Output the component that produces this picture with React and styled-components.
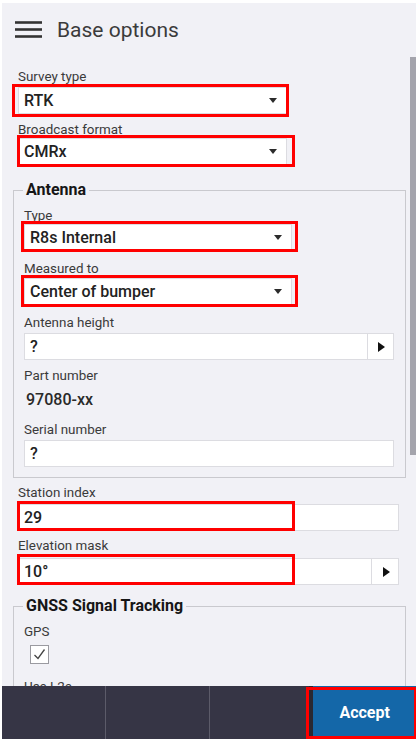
import React from 'react';
import styled, { createGlobalStyle } from 'styled-components';

const Global = createGlobalStyle`
    html, body {
        margin: 0;
        padding: 0;
        background: #ffffff;
    }
    * {
        box-sizing: border-box;
    }
`;

const Frame = styled.div`
    width: 420px;
    height: 742px;
    padding: 3px 4px 3px 2px;
    font-family: Roboto, "Liberation Sans", sans-serif;
    color: #3a3a3a;
`;

const Screen = styled.div`
    height: 100%;
    display: flex;
    flex-direction: column;
    background: #f1f1f6;
    overflow: hidden;
`;

const Header = styled.div`
    height: 54px;
    flex: none;
    display: flex;
    align-items: center;
    padding-left: 13px;
    gap: 14px;
`;

const Title = styled.h1`
    margin: 0;
    font-size: 21px;
    font-weight: 400;
    color: #3b3b3b;
`;

const Body = styled.div`
    flex: 1;
    min-height: 0;
    display: flex;
`;

const Content = styled.div`
    flex: 1;
    overflow: hidden;
    padding: 11.5px 4px 0 11px;
`;

const ScrollTrack = styled.div`
    width: 6px;
    flex: none;
`;

const ScrollThumb = styled.div`
    height: 398px;
    background: #a4a4ac;
`;

const Field = styled.div`
    margin-top: ${p => p.$mt || 0}px;
    padding-left: ${p => (p.$inset ? 0 : 5)}px;
    padding-right: ${p => (p.$inset ? 0 : 7)}px;
`;

const Label = styled.div`
    font-size: 13.4px;
    line-height: 16px;
    height: 16px;
    color: #3a3a3a;
    margin-bottom: ${p => p.$mb || 0}px;
`;

const Box = styled.div`
    position: relative;
    width: ${p => (p.$w ? `${p.$w}px` : '100%')};
    height: 27px;
    display: flex;
    align-items: center;
    background: #ffffff;
    border: 1px solid #dcdce1;
`;

const Value = styled.span`
    flex: 1;
    padding-left: 5px;
    font-size: 16px;
    font-weight: 500;
    color: #222222;
`;

const DropArrow = styled.span`
    width: 0;
    height: 0;
    margin-right: 9px;
    border-left: 4.5px solid transparent;
    border-right: 4.5px solid transparent;
    border-top: 5px solid #2b2b2b;
`;

const SideButton = styled.div`
    width: ${p => p.$w || 26}px;
    height: 100%;
    display: flex;
    align-items: center;
    justify-content: center;
    border-left: 1px solid #dcdce1;
`;

const RightArrow = styled.span`
    width: 0;
    height: 0;
    margin-left: 2px;
    border-top: 5.5px solid transparent;
    border-bottom: 5.5px solid transparent;
    border-left: 7px solid #111111;
`;

const Mark = styled.div`
    position: absolute;
    left: ${p => p.$x}px;
    top: ${p => p.$y}px;
    width: ${p => p.$w}px;
    height: ${p => p.$h}px;
    border: 3px solid #ff0000;
    pointer-events: none;
`;

const Group = styled.fieldset`
    margin: ${p => p.$mt || 0}px 0 0 0;
    min-inline-size: 0;
    border: 1px solid #c9c9ce;
    padding: ${p => p.$pt || 0}px 11px 10px 10px;
`;

const Legend = styled.legend`
    padding: 0 3px;
    margin-left: -1px;
    font-size: 16px;
    line-height: 18px;
    font-weight: 700;
    color: #161616;
`;

const Static = styled.div`
    font-size: 16px;
    line-height: 18px;
    font-weight: 500;
    color: #2a2a2a;
    padding-left: 2px;
`;

const Check = styled.div`
    width: 19px;
    height: 19px;
    margin-left: 6px;
    background: #ffffff;
    border: 1px solid #9a9aa0;
    display: flex;
    align-items: center;
    justify-content: center;
`;

const BottomBar = styled.div`
    flex: none;
    height: 53px;
    display: grid;
    grid-template-columns: repeat(4, 1fr);
    gap: 1px;
    background: #5c5b69;
`;

const BarCell = styled.div`
    background: #363545;
`;

const AcceptButton = styled.button`
    position: relative;
    margin-left: -4px;
    border: none;
    border-left: 4px solid #2a2933;
    background: #1467a8;
    color: #ffffff;
    font-family: Roboto, "Liberation Sans", sans-serif;
    font-size: 16px;
    font-weight: 700;
    padding: 0;
`;

const Hamburger = () => (
    <svg width="28" height="20" viewBox="0 0 28 20">
        <g stroke="#333" strokeWidth="2.6">
            <line x1="0" y1="2.5" x2="27" y2="2.5" />
            <line x1="0" y1="9.5" x2="27" y2="9.5" />
            <line x1="0" y1="16.5" x2="27" y2="16.5" />
        </g>
    </svg>
);

const Select = ({ value, w, mark }) => (
    <Box $w={w}>
        <Value>{value}</Value>
        <DropArrow />
        {mark && <Mark $x={mark[0]} $y={mark[1]} $w={mark[2]} $h={mark[3]} />}
    </Box>
);

const Input = ({ value, arrow, btnW, mark }) => (
    <Box>
        <Value>{value}</Value>
        {arrow && <SideButton $w={btnW}><RightArrow /></SideButton>}
        {mark && <Mark $x={mark[0]} $y={mark[1]} $w={mark[2]} $h={mark[3]} />}
    </Box>
);

export default function App() {
    return (
        <Frame>
            <Global />
            <Screen>
                <Header>
                    <Hamburger />
                    <Title>Base options</Title>
                </Header>
                <Body>
                    <Content>
                        <Field>
                            <Label $mb={2.5}>Survey type</Label>
                            <Select value="RTK" w={269} mark={[-7, -4, 277, 33]} />
                        </Field>
                        <Field $mt={7.5}>
                            <Label $mb={0.5}>Broadcast format</Label>
                            <Select value="CMRx" w={269} mark={[-2, -4, 278, 32]} />
                        </Field>

                        <Group $mt={16} $pt={8.5}>
                            <Legend>Antenna</Legend>
                            <Field $inset>
                                <Label $mb={0.5}>Type</Label>
                                <Select value="R8s Internal" w={268} mark={[-4, -4, 277, 31]} />
                            </Field>
                            <Field $inset $mt={9.5}>
                                <Label $mb={1.5}>Measured to</Label>
                                <Select value="Center of bumper" w={268} mark={[-4, -4, 277, 32]} />
                            </Field>
                            <Field $inset $mt={10}>
                                <Label $mb={2}>Antenna height</Label>
                                <Input value="?" arrow btnW={26} />
                            </Field>
                            <Field $inset $mt={7.5}>
                                <Label $mb={7.5}>Part number</Label>
                                <Static>97080-xx</Static>
                            </Field>
                            <Field $inset $mt={13}>
                                <Label $mb={2}>Serial number</Label>
                                <Input value="?" />
                            </Field>
                        </Group>

                        <Field $mt={7}>
                            <Label $mb={3}>Station index</Label>
                            <Input value="29" mark={[-2, -4, 278, 30]} />
                        </Field>
                        <Field $mt={7}>
                            <Label $mb={4}>Elevation mask</Label>
                            <Input value="10°" arrow btnW={27} mark={[-2, -5, 278, 31]} />
                        </Field>

                        <Group $mt={12} $pt={9}>
                            <Legend>GNSS Signal Tracking</Legend>
                            <Field $inset>
                                <Label $mb={5}>GPS</Label>
                                <Check>
                                    <svg width="17" height="17" viewBox="0 0 17 17">
                                        <path d="M3.5 9 L7 12.5 L13.5 3.5" fill="none" stroke="#444" strokeWidth="1.3" />
                                    </svg>
                                </Check>
                            </Field>
                            <Field $inset $mt={14.5}>
                                <Label>Use L2e</Label>
                            </Field>
                        </Group>
                    </Content>
                    <ScrollTrack>
                        <ScrollThumb />
                    </ScrollTrack>
                </Body>
                <BottomBar>
                    <BarCell />
                    <BarCell />
                    <BarCell />
                    <AcceptButton>
                        Accept
                        <Mark $x={-7} $y={1} $w={111} $h={52} />
                    </AcceptButton>
                </BottomBar>
            </Screen>
        </Frame>
    );
}
